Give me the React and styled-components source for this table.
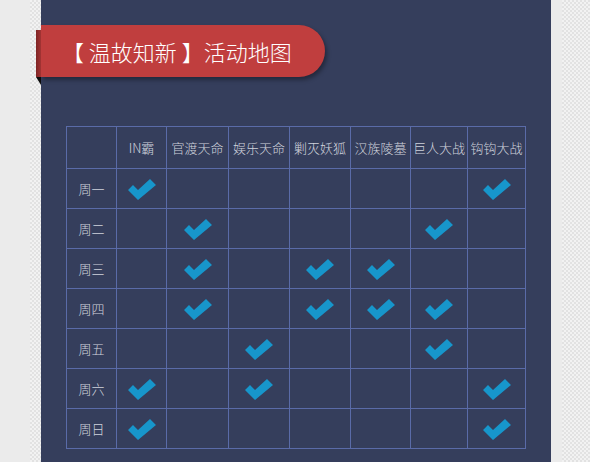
import styled, { createGlobalStyle } from "styled-components";

const games = ["IN霸", "官渡天命", "娱乐天命", "剿灭妖狐", "汉族陵墓", "巨人大战", "钩钩大战"];
const colWidths = [50, 50, 62, 61, 61, 60, 57, 58];

const schedule = [
    { day: "周一", on: ["IN霸", "钩钩大战"] },
    { day: "周二", on: ["官渡天命", "巨人大战"] },
    { day: "周三", on: ["官渡天命", "剿灭妖狐", "汉族陵墓"] },
    { day: "周四", on: ["官渡天命", "剿灭妖狐", "汉族陵墓", "巨人大战"] },
    { day: "周五", on: ["娱乐天命", "巨人大战"] },
    { day: "周六", on: ["IN霸", "娱乐天命", "钩钩大战"] },
    { day: "周日", on: ["IN霸", "钩钩大战"] },
];

function Check() {
    return (
        <CheckSvg viewBox="0 0 28 21" width="28" height="21">
            <polygon points="0,11 5,6 10,11 22,0 28,6 10,21" fill="#1796cb" />
        </CheckSvg>
    );
}

function App() {
    return (
        <>
            <GlobalStyle />
            <Page>
                <Gutter />
                <Checker $w={11} />
                <Panel>
                    <Banner>
                        <Fold />
                        <BannerBody>【 温故知新 】活动地图</BannerBody>
                    </Banner>
                    <Table>
                        <colgroup>
                            {colWidths.map((w, idx) => (
                                <col key={idx} style={{ width: w }} />
                            ))}
                        </colgroup>
                        <thead>
                            <tr>
                                <HeadCell />
                                {games.map((g) => (
                                    <HeadCell key={g}>{g}</HeadCell>
                                ))}
                            </tr>
                        </thead>
                        <tbody>
                            {schedule.map((row) => (
                                <tr key={row.day}>
                                    <DayCell>{row.day}</DayCell>
                                    {games.map((g) => (
                                        <Cell key={g}>{row.on.includes(g) ? <Check /> : null}</Cell>
                                    ))}
                                </tr>
                            ))}
                        </tbody>
                    </Table>
                </Panel>
                <Gutter $w={11} />
                <Checker $grow />
            </Page>
        </>
    );
}

const GlobalStyle = createGlobalStyle`
    html, body {
        margin: 0;
        padding: 0;
        background: #ebebeb;
        font-family: "Noto Sans CJK SC", "Noto Sans", sans-serif;
    }
`;

const Page = styled.div`
    display: flex;
    width: 590px;
    height: 462px;
    overflow: hidden;
`;

const Gutter = styled.div`
    flex: 0 0 ${(p) => p.$w || 30}px;
    background: #ebebeb;
`;

const Checker = styled.div`
    flex: ${(p) => (p.$grow ? "1 1 auto" : `0 0 ${p.$w}px`)};
    background: repeating-conic-gradient(#e2e2e2 0 25%, #f2f2f2 0 50%) 0 0 / 4px 4px;
`;

const Panel = styled.div`
    flex: 0 0 510px;
    background: #353e5c;
    padding-top: 25px;
    box-sizing: border-box;
`;

const Banner = styled.div`
    display: flex;
    margin-left: -5px;
    width: 289px;
    height: 52px;
`;

const Fold = styled.div`
    flex: 0 0 5px;
    margin-top: 5px;
    height: 47px;
    background: linear-gradient(to right, #7e2424, #a33434);
    position: relative;

    &::after {
        content: "";
        position: absolute;
        left: 0;
        top: 47px;
        border-top: 8px solid #0c0c0c;
        border-left: 5px solid transparent;
    }
`;

const BannerBody = styled.div`
    flex: 1;
    display: flex;
    align-items: center;
    padding-left: 21px;
    background: #c03e3e;
    border-radius: 0 26px 26px 0;
    box-shadow: 2px 3px 4px rgba(0, 0, 0, 0.35);
    color: #ffffff;
    font-size: 22px;
    font-weight: 300;
    white-space: nowrap;
`;

const Table = styled.table`
    margin: 49px 0 0 25px;
    border-collapse: collapse;
    table-layout: fixed;
    width: 460px;
    font-size: 13px;
    font-weight: 300;
    color: #d0d3dd;
`;

const HeadCell = styled.th`
    height: 41px;
    padding: 0;
    border: 1px solid #5a6ba8;
    font-weight: 300;
    text-align: center;
    white-space: nowrap;
`;

const DayCell = styled.td`
    height: 39px;
    padding: 0;
    border: 1px solid #5a6ba8;
    text-align: center;
`;

const Cell = styled.td`
    height: 39px;
    padding: 0;
    border: 1px solid #5a6ba8;
    text-align: center;
    vertical-align: middle;
`;

const CheckSvg = styled.svg`
    display: block;
    margin: 2px auto 0;
`;

export default App;
